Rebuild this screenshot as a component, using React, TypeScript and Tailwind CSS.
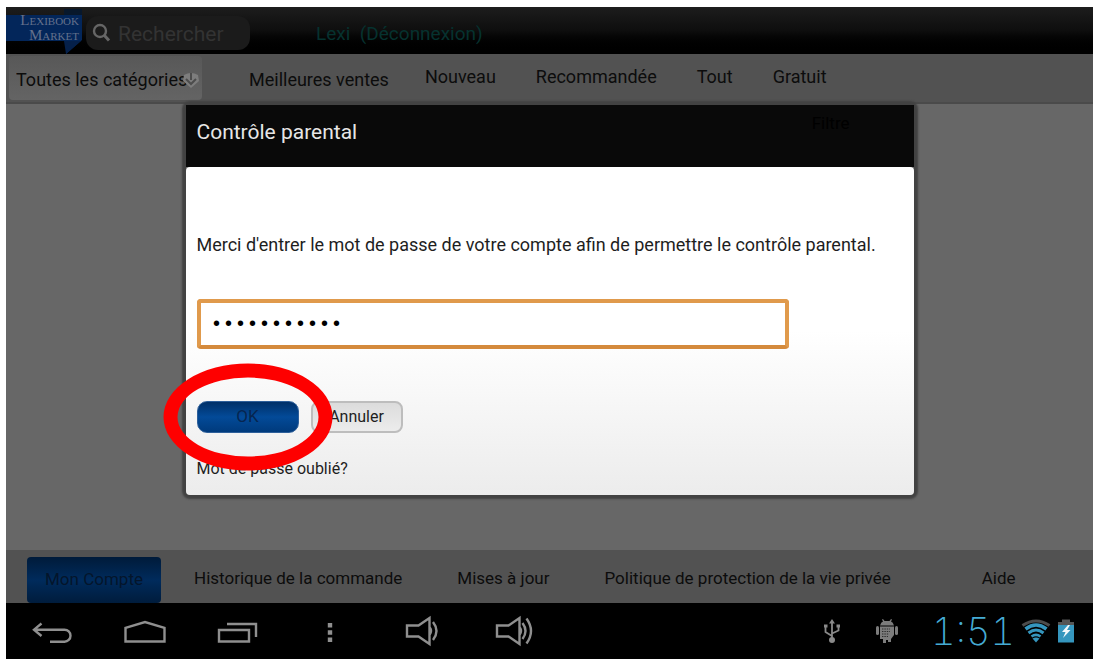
import type { ReactNode } from "react";

const CATEGORY_LINKS = ["Nouveau", "Recommandée", "Tout", "Gratuit"];

const FOOTER_LINKS = [
  "Historique de la commande",
  "Mises à jour",
  "Politique de protection de la vie privée",
];

const Logo = () => (
  <a
    href="#accueil"
    aria-label="Lexibook Market"
    className="relative block h-full w-[76px] shrink-0 pt-1.5"
  >
    <svg
      viewBox="0 0 76 47"
      className="absolute inset-0 h-[47px] w-[76px]"
      aria-hidden="true"
    >
      <path d="M58 2 H76 V8 H58Z" fill="#08182c" />
      <path d="M0 8 H76 V33 L60 47 V34 H0Z" fill="#03265a" />
      <path d="M58 34 H75 L60 47Z" fill="#05204a" />
    </svg>
    <span className="relative flex flex-col pr-[3px] text-right font-['Liberation_Serif',serif] text-[15px] leading-[15px] text-[#63718c] [font-variant:small-caps]">
      <span>Lexibook</span>
      <span>Market</span>
    </span>
  </a>
);

const TopBar = () => (
  <header className="flex h-[47px] items-center bg-linear-to-b from-[#1d1d1d] via-[#0e0e0e] to-black">
    <Logo />
    <label className="ml-1 mt-1 flex h-[34px] w-[164px] shrink-0 items-center rounded-xl bg-[#1b1b1b] pl-1.5">
      <svg viewBox="0 0 20 20" className="h-5 w-5 shrink-0" aria-hidden="true">
        <circle cx="8" cy="8" r="6" fill="none" stroke="#666" strokeWidth="2.4" />
        <path d="M12 12 L17 17.5" stroke="#666" strokeWidth="3" />
      </svg>
      <input
        type="text"
        aria-label="Rechercher"
        placeholder="Rechercher"
        className="ml-1.5 w-full min-w-0 bg-transparent pt-1 text-[21px] text-[#555] outline-none placeholder:text-[#333]"
      />
    </label>
    <a href="#deconnexion" className="ml-[66px] mt-2 whitespace-pre text-[19px] text-[#06322f]">
      Lexi{"  "}(Déconnexion)
    </a>
  </header>
);

const CategoryNav = () => (
  <nav className="flex h-[50px] items-center border-b-2 border-[#4a4a4a] bg-[#525252] pl-[3px] text-[18px] text-[#0c0c0c]">
    <div className="relative h-11 w-[193px] shrink-0">
      <select
        aria-label="Catégories"
        className="h-full w-full appearance-none rounded-sm bg-linear-to-b from-[#585858] to-[#646464] pl-[7px] pt-0.5"
      >
        <option>Toutes les catégories</option>
      </select>
      <svg
        viewBox="0 0 18 18"
        className="pointer-events-none absolute right-0.5 top-[15px] h-[18px] w-[18px]"
        aria-hidden="true"
      >
        <path d="M2 4 Q9 0 16 4 L17 10 L9 17 L1 10Z" fill="#7d7d7d" />
        <path d="M9 2 V9 M4 8 L9 13 L14 8" fill="none" stroke="#4c4c4c" strokeWidth="2" />
      </svg>
    </div>
    <a href="#ventes" className="ml-[47px] whitespace-nowrap pt-0.5">
      Meilleures ventes
    </a>
    <div className="ml-9 flex gap-10 pb-1">
      {CATEGORY_LINKS.map((label) => (
        <a key={label} href="#categorie">
          {label}
        </a>
      ))}
    </div>
  </nav>
);

const ParentalDialog = () => (
  <div
    role="dialog"
    aria-labelledby="dialog-title"
    className="w-full max-w-[728px] rounded-sm shadow-[0_0_2px_4px_#424242]"
  >
    <div className="flex h-[62px] justify-between bg-[#090909] pl-[11px] pr-16 pt-3">
      <h1 id="dialog-title" className="text-[21px] leading-[30px] text-[#e6e6e6]">
        Contrôle parental
      </h1>
      <span className="text-[17px] leading-3 text-black">Filtre</span>
    </div>
    <form
      className="rounded-sm bg-linear-to-b from-white from-50% to-[#ececec] px-[11px] pb-3.5 pt-16 text-[#1e1e1e]"
      onSubmit={(e) => e.preventDefault()}
    >
      <label htmlFor="password" className="block whitespace-nowrap text-[18px] leading-7">
        Merci d'entrer le mot de passe de votre compte afin de permettre le contrôle parental.
      </label>
      <input
        id="password"
        type="password"
        defaultValue="motdepasse1"
        className="mt-10 block h-[50px] w-full max-w-[592px] rounded-sm border-4 border-[#e09a4c] border-b-[#d48a3c] bg-white px-[10px] font-['Liberation_Mono',monospace] text-[20px] text-black outline-none"
      />
      <div className="mt-[52px] flex gap-3">
        <div className="relative">
          <button
            type="submit"
            className="h-8 w-[102px] rounded-[10px] border border-[#2d5f9a] bg-linear-to-b from-[#003068] via-[#034a98] to-[#003a7c] text-[17px] text-[#062550]"
          >
            OK
          </button>
          <div className="pointer-events-none absolute left-1/2 top-1/2 z-10 h-[107px] w-[169px] -translate-x-1/2 -translate-y-1/2 rounded-[50%] border-14 border-[#fe0000]" />
        </div>
        <button
          type="button"
          className="h-8 w-[92px] rounded-lg border-2 border-[#bdbdbd] bg-linear-to-b from-[#dcdcdc] to-[#ececec] text-[16px]"
        >
          Annuler
        </button>
      </div>
      <a href="#oubli" className="mt-6 block w-fit text-[16px] leading-6">
        Mot de passe oublié?
      </a>
    </form>
  </div>
);

const AccountBar = () => (
  <footer className="flex h-[53px] items-center gap-[33px] bg-[#525252] pl-[21px] text-[17px] text-[#0c0c0c]">
    <button className="mt-1.5 h-[46px] w-[134px] shrink-0 rounded-sm bg-linear-to-b from-[#001b3a] via-[#002b5c] to-[#001c3c] text-[#04152b]">
      Mon Compte
    </button>
    <div className="flex gap-[55px] whitespace-nowrap pt-1">
      {FOOTER_LINKS.map((label) => (
        <a key={label} href="#compte">
          {label}
        </a>
      ))}
      <a href="#aide" className="pl-9">
        Aide
      </a>
    </div>
  </footer>
);

interface SystemButtonProps {
  label: string;
  children: ReactNode;
}

const SystemButton = ({ label, children }: SystemButtonProps) => (
  <button aria-label={label} className="flex w-[92px] justify-center">
    <svg
      viewBox="0 0 48 48"
      className="h-12 w-12"
      fill="none"
      stroke="#8f8f8f"
      strokeWidth="2.4"
    >
      {children}
    </svg>
  </button>
);

const UsbIcon = () => (
  <svg viewBox="0 0 18 24" className="h-6 w-[18px]" fill="none" stroke="#8a8a8a" strokeWidth="1.8">
    <path d="M9 3 V21 M9 17 L2.5 13 V7 M9 14.5 L15.5 11.5 V7" />
    <path d="M9 0 L12 4.5 H6Z M1 5.5 H4.5 V8.5 H1Z M13.5 5.5 H17 V8.5 H13.5Z" fill="#8a8a8a" stroke="none" />
    <circle cx="9" cy="21" r="3" fill="#8a8a8a" stroke="none" />
  </svg>
);

const AndroidIcon = () => (
  <svg viewBox="0 0 24 24" className="h-6 w-6" fill="#7c7c7c">
    <path d="M5 6.5 Q6 3 8 2.5 L7 0.5 L8 0 L9.5 2 H14.5 L16 0 L17 0.5 L16 2.5 Q18 3 19 6.5Z" />
    <path d="M5 7.5 H19 V16 L16 20 V23 H13 V21 H11 V24 H8 V20 H5Z" />
    <rect x="1" y="7" width="3" height="9" rx="1.5" />
    <rect x="20" y="7" width="3" height="9" rx="1.5" />
    <path
      d="M7 10 H15 M7 12.5 H15 M7 15 H14 M7 17.5 H13"
      stroke="#2c2c2c"
      strokeWidth="1.2"
      strokeDasharray="1.4 1"
    />
  </svg>
);

const WifiIcon = () => (
  <svg viewBox="0 0 30 24" className="h-6 w-[30px]" fill="none" strokeWidth="3">
    <path d="M1.5 6.5 Q15 -2.5 28.5 6.5" stroke="#4c4c4c" />
    <g stroke="#3596be">
      <path d="M4.5 10 Q15 2 25.5 10" strokeWidth="3.6" />
      <path d="M7.5 14 Q15 8 22.5 14" />
      <path d="M10.5 17.6 Q15 14 19.5 17.6" strokeWidth="2.6" />
    </g>
    <path d="M11.5 19.5 Q15 17.5 18.5 19.5 L15 23.5Z" fill="#3596be" />
  </svg>
);

const BatteryIcon = () => (
  <svg viewBox="0 0 18 24" className="h-6 w-[18px]">
    <path d="M1 6 V3 H5 V0.5 H13 V3 H17 V6Z" fill="#555" />
    <path d="M1 6 H17 V23.5 H1Z" fill="#3596be" />
    <path d="M11 6 L5 13 H8.5 L6 19 L13.5 11 H10 L13 6Z" fill="#f2f8fb" />
  </svg>
);

const SystemBar = () => (
  <div className="flex h-14 items-center bg-black pl-px pr-[18px]">
    <SystemButton label="Retour">
      <path d="M12.5 16.5 L5 22.7 L12.5 29 M5 22.7 H35.5 A6 6 0 0 1 35.5 34.7 H21" />
    </SystemButton>
    <SystemButton label="Accueil">
      <path d="M4.5 20.8 L24 15 L43.5 20.8 V34.5 H4.5Z" />
    </SystemButton>
    <SystemButton label="Applications récentes">
      <path d="M6 23 H36 V34.5 H6Z M14 17 H43 V30" />
    </SystemButton>
    <SystemButton label="Menu">
      <path d="M25 16 V35" strokeWidth="4.4" strokeDasharray="4.4 2.9" />
    </SystemButton>
    <SystemButton label="Baisser le volume">
      <path d="M10 18.5 H21.5 L32.5 11 V37 L21.5 29.5 H10Z M32.5 20 Q35.5 24 32.5 28" />
      <path d="M36 15 Q43 24 36 33" />
    </SystemButton>
    <SystemButton label="Augmenter le volume">
      <path d="M8 18.5 H19.5 L30.5 11 V37 L19.5 29.5 H8Z M30.5 20 Q33.5 24 30.5 28" />
      <path d="M33.5 16 Q39.5 24 33.5 32 M37.5 11.5 Q46.5 24 37.5 36.5" />
    </SystemButton>
    <div className="ml-auto flex items-center">
      <UsbIcon />
      <div className="ml-[34px]">
        <AndroidIcon />
      </div>
      <time className="ml-8 font-['Inter',sans-serif] text-[38px] font-extralight leading-10 tabular-nums text-[#45abd4]">
        1:51
      </time>
      <div className="ml-1.5 flex gap-1.5">
        <WifiIcon />
        <BatteryIcon />
      </div>
    </div>
  </div>
);

export default function App() {
  return (
    <div className="min-h-screen bg-white pl-1.5 pr-0.5 pt-[7px] font-['Roboto',sans-serif]">
      <div className="relative flex min-h-[calc(100vh-7px)] flex-col bg-[#676767]">
        <TopBar />
        <CategoryNav />
        <main className="min-h-[445px] flex-1" />
        <AccountBar />
        <SystemBar />
        <div className="absolute inset-x-0 top-[98px] flex justify-center">
          <ParentalDialog />
        </div>
      </div>
    </div>
  );
}
